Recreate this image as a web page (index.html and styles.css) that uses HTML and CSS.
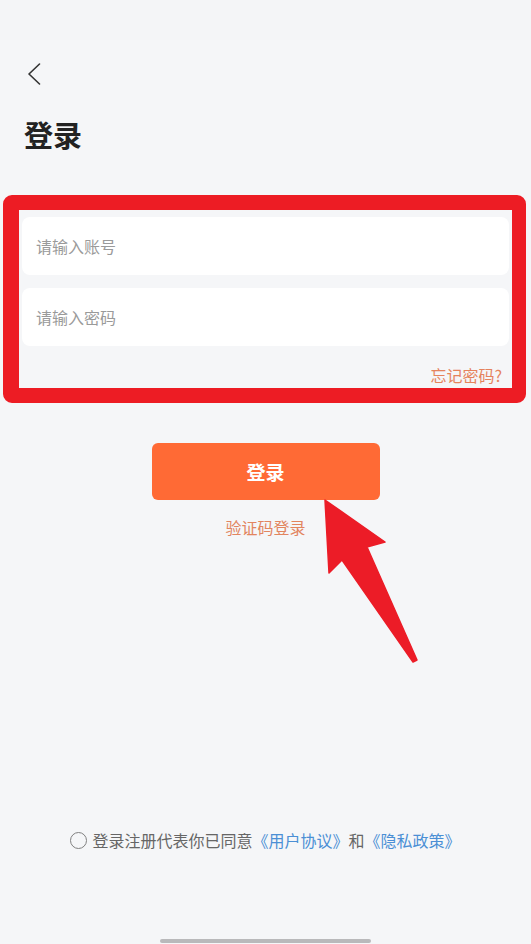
FILE: index.html
```html
<!DOCTYPE html>
<html>
<head>
    <meta charset="utf-8">
    <link rel="stylesheet" href="styles.css">
</head>
<body>
    <div class="page">
        <div class="status-bar"></div>
        <div class="nav">
            <svg class="back" width="14" height="22" viewBox="0 0 14 22">
                <path d="M12.5 1 L2 11 L12.5 21" fill="none" stroke="#333" stroke-width="1.6" stroke-linecap="round" stroke-linejoin="round"/>
            </svg>
        </div>
        <h1 class="title">登录</h1>

        <form class="login-form">
            <input class="field" type="text" placeholder="请输入账号">
            <input class="field" type="password" placeholder="请输入密码">
            <div class="forgot">忘记密码?</div>
            <button type="button" class="submit">登录</button>
            <div class="sms-login">验证码登录</div>
        </form>

        <div class="footer">
            <div class="agreement">
                <span class="radio"></span>
                <span>登录注册代表你已同意</span><span class="link">《用户协议》</span><span>和</span><span class="link">《隐私政策》</span>
            </div>
            <div class="home-bar"></div>
        </div>

        <!-- annotation overlay -->
        <div class="highlight"></div>
        <svg class="arrow" width="531" height="944" viewBox="0 0 531 944">
            <polygon points="325,500 385,542 367,547 417,660 413,662 342,560 329,573" fill="#ec1c27" stroke="#ec1c27" stroke-width="1.5" stroke-linejoin="round"/>
        </svg>
    </div>
</body>
</html>
```

FILE: styles.css
```css
* {
    box-sizing: border-box;
}
body {
    margin: 0;
    background-color: #f5f6f8;
    font-family: "Noto Sans CJK SC", "Noto Sans", sans-serif;
}
.page {
    position: relative;
    width: 531px;
    min-height: 944px;
    display: flex;
    flex-direction: column;
    overflow: hidden;
}
.status-bar {
    height: 40px;
    background-color: #f4f5f7;
}
.nav {
    padding: 23px 0 0 27px;
    height: 45px;
}
.back {
    display: block;
}
.title {
    margin: 29px 0 0 24px;
    font-size: 29px;
    line-height: 40px;
    font-weight: 700;
    color: #222;
}
.login-form {
    margin-top: 63px;
    display: flex;
    flex-direction: column;
}
.field {
    margin: 0 22px;
    height: 58px;
    border: none;
    border-radius: 8px;
    background-color: white;
    padding: 0 14px;
    font-family: inherit;
    font-size: 16px;
    color: #333;
    outline: none;
}
.field + .field {
    margin-top: 13px;
}
.field::placeholder {
    color: #9a9a9a;
}
.forgot {
    margin: 19px 29px 0 0;
    text-align: right;
    font-size: 16px;
    line-height: 20px;
    color: #e5835d;
}
.submit {
    margin: 58px auto 0;
    width: 228px;
    height: 57px;
    border: none;
    border-radius: 6px;
    background-color: #ff6a35;
    color: white;
    font-family: inherit;
    font-size: 19px;
    font-weight: 700;
    cursor: pointer;
}
.sms-login {
    margin-top: 17px;
    text-align: center;
    font-size: 16px;
    line-height: 20px;
    color: #e2855f;
}
.footer {
    margin-top: auto;
    display: flex;
    flex-direction: column;
    align-items: center;
}
.agreement {
    display: flex;
    align-items: center;
    font-size: 16px;
    line-height: 24px;
    color: #666;
}
.radio {
    width: 17px;
    height: 17px;
    border: 1.5px solid #808080;
    border-radius: 50%;
    margin-right: 5px;
}
.link {
    color: #4b8fd5;
}
.home-bar {
    margin: 87px 0 1px;
    width: 211px;
    height: 4px;
    border-radius: 2px;
    background-color: #b9b9bb;
}
.highlight {
    position: absolute;
    left: 3px;
    top: 195px;
    width: 523px;
    height: 208px;
    border: 16px solid #ed1c24;
    border-top-width: 15px;
    border-bottom-width: 15px;
    border-right-width: 14px;
    border-radius: 9px;
}
.arrow {
    position: absolute;
    left: 0;
    top: 0;
    pointer-events: none;
}
```
